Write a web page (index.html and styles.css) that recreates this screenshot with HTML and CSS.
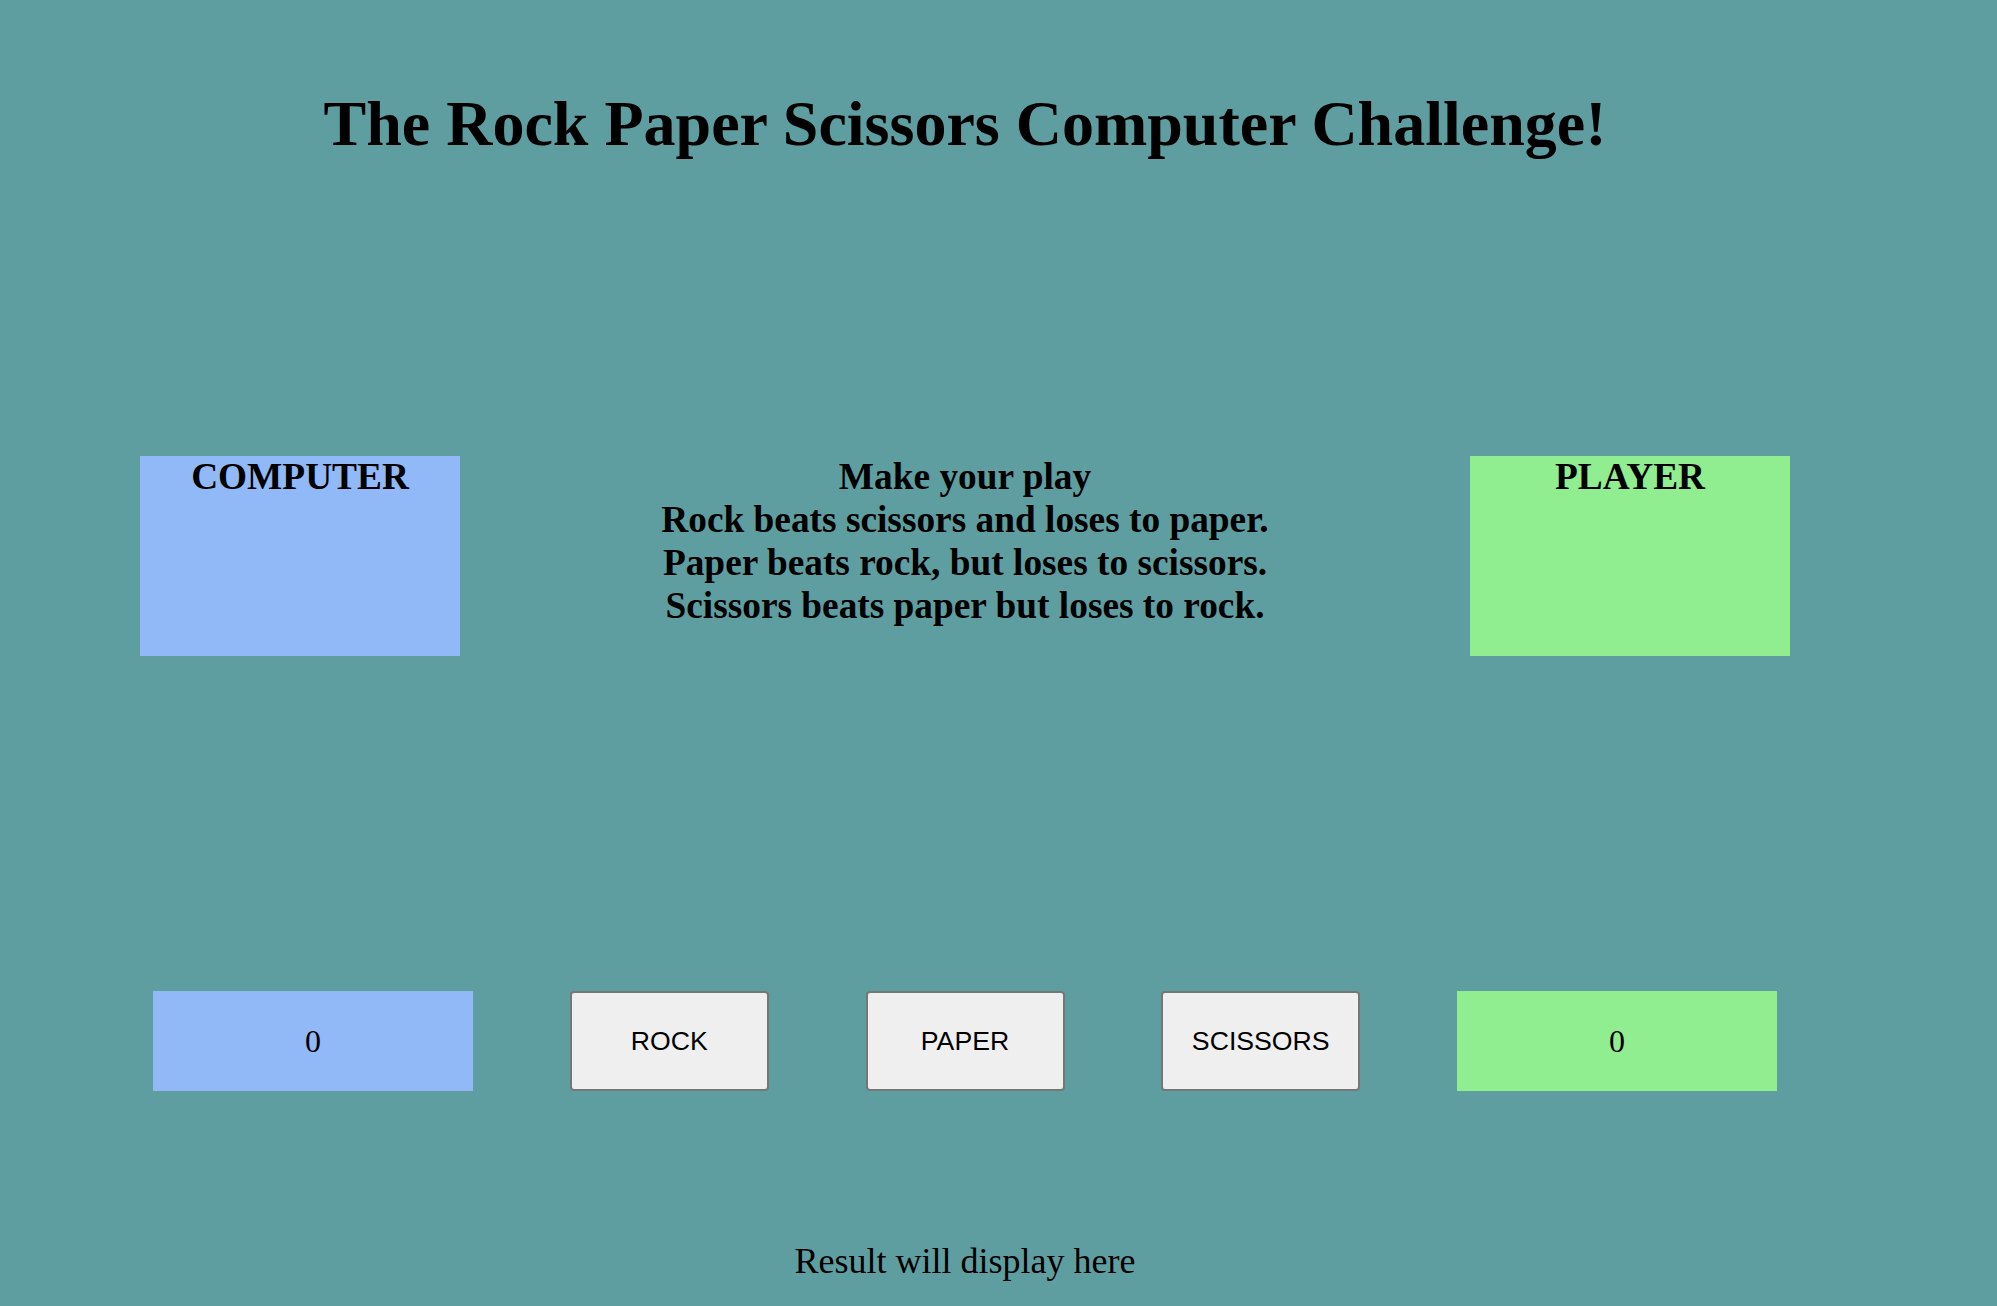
FILE: index.html
```html
<!DOCTYPE html>
<html lang="en">
<head>
<meta charset="utf-8">
<title>Rock Paper Scissors</title>
<link rel="stylesheet" href="styles.css">
</head>
<body>
<div class="page">
  <h1 class="title">The Rock Paper Scissors Computer Challenge!</h1>
  <div class="arena">
    <div class="panel panel-computer">
      <h2 class="panel-title">COMPUTER</h2>
    </div>
    <div class="rules">
      <div>Make your play</div>
      <div>Rock beats scissors and loses to paper.</div>
      <div>Paper beats rock, but loses to scissors.</div>
      <div>Scissors beats paper but loses to rock.</div>
    </div>
    <div class="panel panel-player">
      <h2 class="panel-title">PLAYER</h2>
    </div>
  </div>
  <div class="controls">
    <div class="score score-computer">0</div>
    <button class="play-btn" type="button">ROCK</button>
    <button class="play-btn" type="button">PAPER</button>
    <button class="play-btn" type="button">SCISSORS</button>
    <div class="score score-player">0</div>
  </div>
  <p class="result">Result will display here</p>
</div>
</body>
</html>
```

FILE: styles.css
```css
html, body {
  margin: 0;
  padding: 0;
  background: #5f9ea0;
}

body {
  font-family: "Liberation Serif", "Times New Roman", serif;
  color: #000;
}

.page {
  width: 1930px;
  padding-top: 87px;
}

.title {
  margin: 0;
  font-size: 64px;
  font-weight: bold;
  line-height: normal;
  text-align: center;
}

.arena {
  display: grid;
  grid-template-columns: 320px 1fr 320px;
  column-gap: 140px;
  padding: 0 140px;
  margin-top: 295px;
}

.panel {
  height: 200px;
  text-align: center;
}

.panel-computer {
  background: #91b9f7;
}

.panel-player {
  background: #90ee90;
}

.panel-title {
  margin: -1px 0 0;
  font-size: 37.33px;
  font-weight: bold;
  line-height: normal;
}

.rules {
  margin-top: -1px;
  font-size: 37.33px;
  font-weight: bold;
  line-height: normal;
  text-align: center;
}

.controls {
  display: flex;
  justify-content: space-between;
  align-items: flex-start;
  padding: 0 153px;
  margin-top: 335px;
}

.score {
  width: 320px;
  height: 100px;
  display: flex;
  align-items: center;
  justify-content: center;
  font-size: 32px;
}

.score-computer {
  background: #91b9f7;
}

.score-player {
  background: #90ee90;
}

.play-btn {
  box-sizing: border-box;
  width: 199px;
  height: 100px;
  background: #efefef;
  border: 2px solid #767676;
  border-radius: 4px;
  font-family: "Liberation Sans", Arial, sans-serif;
  font-size: 26.67px;
  color: #000;
  padding: 0;
}

.result {
  margin: 149px 0 0;
  font-size: 36px;
  line-height: normal;
  text-align: center;
}
```
